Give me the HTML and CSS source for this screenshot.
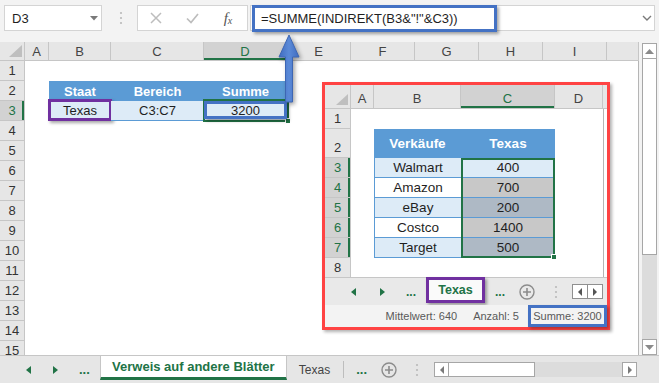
FILE: index.html
```html
<!DOCTYPE html>
<html lang="de">
<head>
    <meta charset="UTF-8">
    <meta name="viewport" content="width=device-width, initial-scale=1.0">
    <title>Verweis auf andere Blätter</title>
    <link rel="stylesheet" href="styles.css">
</head>
<body>
<div class="app">

    <!-- Namenfeld + Bearbeitungsleiste -->
    <div class="formula-row">
        <div class="namebox">
            <span>D3</span>
            <svg width="8" height="5" viewBox="0 0 8 5"><polygon points="0,0 8,0 4,4.5" fill="#7a7a7a"/></svg>
        </div>
        <svg class="grip" width="4" height="14" viewBox="0 0 4 14"><circle cx="2" cy="2" r="1.1"/><circle cx="2" cy="7" r="1.1"/><circle cx="2" cy="12" r="1.1"/></svg>
        <div class="fx-buttons">
            <span class="fx-btn"><svg width="12" height="12" viewBox="0 0 12 12"><path d="M1 1 L11 11 M11 1 L1 11" stroke="#bdbdbd" stroke-width="1.5"/></svg></span>
            <span class="fx-btn"><svg width="13" height="11" viewBox="0 0 13 11"><path d="M1 5.5 L5 9.5 L12 1" fill="none" stroke="#bdbdbd" stroke-width="1.7"/></svg></span>
            <span class="fx-btn fx-label">f<span class="fx-x">x</span></span>
        </div>
        <div class="formula">
            <span>=SUMME(INDIREKT(B3&amp;"!"&amp;C3))</span>
            <span class="mark mark-blue formula-mark"></span>
            <svg class="formula-chevron" width="10" height="6" viewBox="0 0 10 6"><path d="M1 1 L5 5 L9 1" fill="none" stroke="#7a7a7a" stroke-width="1.4"/></svg>
        </div>
    </div>

    <div class="sheet-area">
        <div class="sheet">
            <div class="col-heads">
                <div class="corner"><svg width="13" height="12" viewBox="0 0 13 12"><polygon points="13,0 13,12 0,12" fill="#bfbfbf"/></svg></div>
                <div class="ch col-a">A</div>
                <div class="ch col-b">B</div>
                <div class="ch col-c">C</div>
                <div class="ch col-d active">D</div>
                <div class="ch col-std">E</div>
                <div class="ch col-std">F</div>
                <div class="ch col-std">G</div>
                <div class="ch col-std">H</div>
                <div class="ch col-std">I</div>
                <div class="ch col-rest"></div>
            </div>
            <div class="sheet-body">
                <div class="row-heads">
                    <div class="rh">1</div>
                    <div class="rh">2</div>
                    <div class="rh active">3</div>
                    <div class="rh">4</div>
                    <div class="rh">5</div>
                    <div class="rh">6</div>
                    <div class="rh">7</div>
                    <div class="rh">8</div>
                    <div class="rh">9</div>
                    <div class="rh">10</div>
                    <div class="rh">11</div>
                    <div class="rh">12</div>
                    <div class="rh">13</div>
                    <div class="rh">14</div>
                    <div class="rh">15</div>
                </div>
                <div class="cells">
                    <div class="ref-table">
                        <div class="th">Staat</div>
                        <div class="th">Bereich</div>
                        <div class="th">Summe</div>
                        <div class="td">Texas<span class="mark mark-purple mark-b3"></span></div>
                        <div class="td">C3:C7</div>
                        <div class="td">3200<span class="cell-select"><i class="fill-handle"></i></span><span class="mark mark-blue mark-d3"></span></div>
                    </div>
                </div>
            </div>
        </div>
        <div class="vscroll">
            <div class="sb-btn"><svg width="9" height="5" viewBox="0 0 9 5"><polygon points="0,5 9,5 4.5,0" fill="#8a8a8a"/></svg></div>
            <div class="sb-thumb"></div>
            <div class="sb-track"></div>
            <div class="sb-btn"><svg width="9" height="5" viewBox="0 0 9 5"><polygon points="0,0 9,0 4.5,5" fill="#8a8a8a"/></svg></div>
        </div>
    </div>

    <div class="tabbar main-tabs">
        <svg class="nav-prev" width="5" height="8" viewBox="0 0 5 8"><polygon points="5,0 5,8 0,4"/></svg>
        <svg class="nav-next" width="5" height="8" viewBox="0 0 5 8"><polygon points="0,0 0,8 5,4"/></svg>
        <span class="tab-more first-more">...</span>
        <div class="sheet-tab active">Verweis auf andere Blätter</div>
        <div class="sheet-tab">Texas</div>
        <span class="tab-sep"></span>
        <span class="tab-more">...</span>
        <svg class="add-sheet" width="16" height="16" viewBox="0 0 16 16"><circle cx="8" cy="8" r="7" fill="none" stroke="#8c8c8c" stroke-width="1.4"/><path d="M8 4 V12 M4 8 H12" stroke="#8c8c8c" stroke-width="1.6"/></svg>
        <svg class="grip" width="4" height="14" viewBox="0 0 4 14"><circle cx="2" cy="2" r="1.1"/><circle cx="2" cy="7" r="1.1"/><circle cx="2" cy="12" r="1.1"/></svg>
        <div class="hscroll">
            <div class="hs-btn"><svg width="4" height="8" viewBox="0 0 4 8"><polygon points="4,0 4,8 0,4" fill="#7a7a7a"/></svg></div>
            <div class="hs-thumb"></div>
            <div class="hs-track"></div>
            <div class="hs-btn"><svg width="4" height="8" viewBox="0 0 4 8"><polygon points="0,0 0,8 4,4" fill="#7a7a7a"/></svg></div>
        </div>
    </div>

    <!-- eingefügter Ausschnitt vom Blatt "Texas" -->
    <div class="inset">
        <div class="i-heads">
            <div class="i-corner"><svg width="12" height="11" viewBox="0 0 12 11"><polygon points="12,0 12,11 0,11" fill="#bfbfbf"/></svg></div>
            <div class="ich i-col-a">A</div>
            <div class="ich i-col-b">B</div>
            <div class="ich i-col-c active">C</div>
            <div class="ich i-col-d">D</div>
            <div class="i-fill"></div>
        </div>
        <div class="i-body">
            <div class="i-rows">
                <div class="irh">1</div>
                <div class="irh tall">2</div>
                <div class="irh active">3</div>
                <div class="irh active">4</div>
                <div class="irh active">5</div>
                <div class="irh active">6</div>
                <div class="irh active">7</div>
                <div class="irh short">8</div>
            </div>
            <div class="i-cells">
                <div class="sales-table">
                    <div class="th">Verkäufe</div>
                    <div class="th">Texas</div>
                    <div class="sd name light">Walmart</div>
                    <div class="sd light">400</div>
                    <div class="sd name">Amazon</div>
                    <div class="sd sel">700</div>
                    <div class="sd name light">eBay</div>
                    <div class="sd sel-light">200</div>
                    <div class="sd name">Costco</div>
                    <div class="sd sel">1400</div>
                    <div class="sd name light">Target</div>
                    <div class="sd sel-light">500</div>
                    <span class="range-select"><i class="fill-handle"></i></span>
                </div>
            </div>
        </div>
        <div class="tabbar i-tabs">
            <svg class="nav-prev" width="5" height="8" viewBox="0 0 5 8"><polygon points="5,0 5,8 0,4"/></svg>
            <svg class="nav-next" width="5" height="8" viewBox="0 0 5 8"><polygon points="0,0 0,8 5,4"/></svg>
            <span class="tab-more first-more">...</span>
            <div class="inset-tab">Texas</div>
            <span class="tab-more">...</span>
            <svg class="add-sheet" width="16" height="16" viewBox="0 0 16 16"><circle cx="8" cy="8" r="7" fill="none" stroke="#8c8c8c" stroke-width="1.4"/><path d="M8 4 V12 M4 8 H12" stroke="#8c8c8c" stroke-width="1.6"/></svg>
            <svg class="grip" width="4" height="14" viewBox="0 0 4 14"><circle cx="2" cy="2" r="1.1"/><circle cx="2" cy="7" r="1.1"/><circle cx="2" cy="12" r="1.1"/></svg>
            <div class="mini-scroll">
                <span><svg width="4" height="8" viewBox="0 0 4 8"><polygon points="4,0 4,8 0,4" fill="#555"/></svg></span>
                <span><svg width="4" height="8" viewBox="0 0 4 8"><polygon points="0,0 0,8 4,4" fill="#555"/></svg></span>
            </div>
        </div>
        <div class="i-status">
            <span>Mittelwert: 640</span>
            <span class="status-count">Anzahl: 5</span>
            <span class="status-sum">Summe: 3200</span>
        </div>
    </div>

    <svg class="arrow" width="27" height="74" viewBox="0 0 27 74">
        <defs>
            <linearGradient id="arrowFill" x1="0" x2="1" y1="0" y2="0">
                <stop offset="0" stop-color="#3f6cc0"/>
                <stop offset="0.5" stop-color="#5b8ad8"/>
                <stop offset="1" stop-color="#3f6cc0"/>
            </linearGradient>
        </defs>
        <polygon points="13,3 23,25 16.5,25 16.5,70 9.5,70 9.5,25 3,25" fill="url(#arrowFill)" stroke="#3d66b3" stroke-width="1"/>
    </svg>
</div>
</body>
</html>
```

FILE: styles.css
```css
* {
    box-sizing: border-box;
}
body {
    margin: 0;
    font-family: "Liberation Sans", Arial, sans-serif;
    color: #1f1f1f;
}
.app {
    position: relative;
    width: 659px;
    height: 383px;
    overflow: hidden;
    background: #f3f3f3;
}

/* annotation frames */
.mark {
    position: absolute;
    border: 3px solid;
    box-shadow: 2px 2px 3px rgba(0, 0, 0, 0.35);
}
.mark-blue {
    border-color: #4472c4;
}
.mark-purple {
    border-color: #7030a0;
}

/* formula bar */
.formula-row {
    display: flex;
    align-items: flex-start;
    height: 42px;
    padding: 5px 0 0 4px;
}
.namebox {
    display: flex;
    align-items: center;
    justify-content: space-between;
    width: 98px;
    height: 26px;
    padding: 0 3px 0 7px;
    background: #fff;
    border: 1px solid #d4d4d4;
    font-size: 13px;
}
.grip {
    fill: #bababa;
}
.formula-row .grip {
    margin: 6px 0 0 17px;
}
.fx-buttons {
    display: flex;
    align-items: center;
    width: 111px;
    height: 26px;
    margin-left: 14px;
    background: #fff;
    border: 1px solid #d4d4d4;
}
.fx-btn {
    display: flex;
    justify-content: center;
    width: 36px;
}
.fx-label {
    font-family: "Liberation Serif", serif;
    font-style: italic;
    font-size: 15px;
    color: #555;
}
.fx-x {
    font-size: 10px;
    margin-top: 5px;
}
.formula {
    position: relative;
    display: flex;
    align-items: center;
    width: 405px;
    height: 26px;
    margin-left: 2px;
    padding: 0 2px 0 10px;
    background: #fff;
    border: 1px solid #d4d4d4;
    font-size: 13px;
}
.formula-mark {
    left: 1px;
    top: -1px;
    width: 245px;
    height: 27px;
}
.formula-chevron {
    margin-left: auto;
}

/* sheet grid */
.sheet-area {
    display: flex;
    height: 313px;
}
.sheet {
    display: flex;
    flex-direction: column;
    width: 639px;
}
.col-heads {
    display: flex;
    height: 19px;
    background: #e6e6e6;
    border-bottom: 1px solid #c6c6c6;
}
.corner {
    display: flex;
    align-items: flex-end;
    justify-content: flex-end;
    width: 25px;
    padding: 0 2px 3px 0;
    border-right: 1px solid #c6c6c6;
}
.ch {
    display: flex;
    align-items: center;
    justify-content: center;
    border-right: 1px solid #c6c6c6;
    font-size: 13px;
    color: #444;
}
.ch.active {
    background: #d2d2d2;
    color: #217346;
    box-shadow: inset 0 -2px #217346;
}
.col-a { width: 24px; }
.col-b { width: 62px; }
.col-c { width: 93px; }
.col-d { width: 83px; }
.col-std { width: 64px; }
.col-rest {
    flex: 1;
}
.sheet-body {
    display: flex;
    flex: 1;
    overflow: hidden;
    border-right: 1px solid #b5b5b5;
}
.row-heads {
    flex-shrink: 0;
    width: 25px;
    background: #e6e6e6;
    border-right: 1px solid #c6c6c6;
}
.rh {
    display: flex;
    align-items: center;
    justify-content: center;
    height: 20px;
    border-bottom: 1px solid #c6c6c6;
    font-size: 13px;
    color: #333;
}
.rh.active {
    background: #d2d2d2;
    color: #217346;
    box-shadow: inset -2px 0 #217346;
}
.cells {
    flex: 1;
    background: #fff;
}
.ref-table {
    display: grid;
    grid-template-columns: 62px 93px 83px;
    grid-template-rows: 20px 20px;
    width: max-content;
    margin: 20px 0 0 24px;
    font-size: 13px;
}
.th {
    display: flex;
    align-items: center;
    justify-content: center;
    background: #5b9bd5;
    color: #fff;
    font-weight: bold;
}
.td {
    position: relative;
    display: flex;
    align-items: center;
    justify-content: center;
    background: #ddebf7;
    border-bottom: 1px solid #5b9bd5;
}
.mark-b3 {
    left: -1px;
    top: -2px;
    right: -1px;
    bottom: -1px;
}
.mark-d3 {
    left: 0;
    top: 0;
    right: 0;
    bottom: 1px;
}
.cell-select {
    position: absolute;
    left: -1px;
    top: -2px;
    right: -2px;
    bottom: -2px;
    border: 2px solid #217346;
}
.fill-handle {
    position: absolute;
    right: -4px;
    bottom: -4px;
    width: 6px;
    height: 6px;
    background: #217346;
    border: 1px solid #fff;
}

/* scrollbars */
.vscroll {
    display: flex;
    flex-direction: column;
    width: 15px;
    height: 312px;
    margin: 1px 0 0 3px;
    background: #dcdcdc;
}
.sb-btn {
    display: flex;
    align-items: center;
    justify-content: center;
    height: 16px;
    background: #fff;
    border: 1px solid #a6a6a6;
}
.sb-thumb {
    height: 196px;
    background: #fff;
    border: 1px solid #a6a6a6;
    border-top: none;
}
.sb-track {
    flex: 1;
}

/* sheet tabs */
.tabbar {
    display: flex;
    align-items: center;
    fill: #217346;
}
.main-tabs {
    height: 28px;
    background: #e6e6e6;
    border-top: 1px solid #c6c6c6;
}
.tab-more {
    font-size: 13px;
    font-weight: bold;
    color: #217346;
}
.main-tabs .nav-prev { margin-left: 26px; }
.main-tabs .nav-next { margin-left: 22px; }
.main-tabs .first-more { margin-left: 21px; }
.sheet-tab {
    display: flex;
    align-items: center;
    padding: 0 12px;
    font-size: 12px;
    color: #444;
}
.sheet-tab.active {
    align-self: flex-start;
    justify-content: center;
    width: 187px;
    height: 24px;
    margin-left: 10px;
    padding: 0;
    background: #fff;
    border-left: 1px solid #c6c6c6;
    border-right: 1px solid #c6c6c6;
    border-bottom: 3px solid #217346;
    font-size: 13px;
    font-weight: bold;
    color: #217346;
}
.tab-sep {
    width: 1px;
    height: 17px;
    margin-left: 1px;
    background: #bdbdbd;
}
.main-tabs .tab-sep + .tab-more { margin-left: 12px; }
.main-tabs .add-sheet { margin-left: 14px; }
.main-tabs .grip { margin-left: 18px; }
.hscroll {
    display: flex;
    width: 203px;
    height: 15px;
    margin-left: 15px;
    background: #dcdcdc;
}
.hs-btn {
    display: flex;
    align-items: center;
    justify-content: center;
    width: 15px;
    background: #fff;
    border: 1px solid #a6a6a6;
}
.hs-thumb {
    width: 86px;
    background: #fff;
    border: 1px solid #a6a6a6;
    border-left: none;
}
.hs-track {
    flex: 1;
}

/* pasted picture of the "Texas" sheet */
.inset {
    position: absolute;
    left: 322px;
    top: 82px;
    display: flex;
    flex-direction: column;
    width: 288px;
    height: 248px;
    background: #fff;
    border: 3px solid #ff4343;
    box-shadow: 2px 2px 3px rgba(0, 0, 0, 0.3);
}
.i-heads {
    display: flex;
    flex-shrink: 0;
    height: 24px;
    background: #e6e6e6;
    border-bottom: 1px solid #c6c6c6;
}
.i-corner {
    display: flex;
    align-items: flex-end;
    justify-content: flex-end;
    width: 26px;
    padding: 0 2px 3px 0;
    border-right: 1px solid #c6c6c6;
}
.ich {
    display: flex;
    align-items: center;
    justify-content: center;
    padding-top: 4px;
    border-right: 1px solid #c6c6c6;
    font-size: 13px;
    color: #444;
}
.ich.active {
    background: #d2d2d2;
    color: #217346;
    box-shadow: inset 0 -2px #217346;
}
.i-col-a { width: 23px; }
.i-col-b { width: 87px; }
.i-col-c { width: 94px; }
.i-col-d { width: 48px; }
.i-fill {
    flex: 1;
}
.i-body {
    display: flex;
    flex-shrink: 0;
    height: 168px;
}
.i-rows {
    width: 26px;
    background: #e6e6e6;
    border-right: 1px solid #c6c6c6;
}
.irh {
    display: flex;
    align-items: flex-end;
    justify-content: center;
    height: 20px;
    padding-bottom: 2px;
    border-bottom: 1px solid #c6c6c6;
    font-size: 13px;
    color: #333;
}
.irh.tall {
    height: 29px;
}
.irh.short {
    height: 19px;
    border-bottom: none;
}
.irh.active {
    background: #d2d2d2;
    color: #217346;
    box-shadow: inset -2px 0 #217346;
}
.i-cells {
    width: 253px;
    background: #fff;
    border-right: 1px solid #b5b5b5;
}
.sales-table {
    position: relative;
    display: grid;
    grid-template-columns: 87px 94px;
    grid-template-rows: 29px repeat(5, 20px);
    width: max-content;
    margin: 20px 0 0 23px;
    font-size: 13.5px;
}
.sd {
    display: flex;
    align-items: center;
    justify-content: center;
    background: #fff;
    border-bottom: 1px solid #5b9bd5;
}
.sd.name {
    border-left: 1px solid #5b9bd5;
}
.sd.light {
    background: #ddebf7;
}
.sd.sel {
    background: #c8c8c8;
}
.sd.sel-light {
    background: #aeb9c5;
}
.range-select {
    position: absolute;
    left: 87px;
    top: 29px;
    width: 94px;
    height: 100px;
    border: 2px solid #217346;
}
.i-tabs {
    flex-shrink: 0;
    height: 28px;
    background: #e9e9e9;
    border-top: 1px solid #c6c6c6;
}
.i-tabs .nav-prev { margin-left: 26px; }
.i-tabs .nav-next { margin-left: 24px; }
.i-tabs .tab-more {
    font-size: 12px;
}
.i-tabs .first-more { margin-left: 21px; }
.inset-tab {
    align-self: flex-start;
    display: flex;
    align-items: center;
    justify-content: center;
    width: 59px;
    height: 26px;
    margin: -1px 10px 0 10px;
    background: #fafafa;
    border: 3px solid #7030a0;
    box-shadow: 2px 2px 3px rgba(0, 0, 0, 0.35);
    font-size: 12.5px;
    font-weight: bold;
    color: #217346;
}
.i-tabs .add-sheet { margin-left: 14px; }
.i-tabs .grip { margin-left: 19px; }
.mini-scroll {
    display: flex;
    width: 31px;
    height: 15px;
    margin-left: 14px;
    background: #fff;
    border: 1px solid #8f8f8f;
}
.mini-scroll span {
    display: flex;
    align-items: center;
    justify-content: center;
    flex: 1;
}
.mini-scroll span + span {
    border-left: 1px solid #8f8f8f;
}
.i-status {
    display: flex;
    align-items: center;
    justify-content: flex-end;
    flex-shrink: 0;
    height: 22px;
    background: #f3f3f3;
    font-size: 11px;
    color: #595959;
}
.status-count {
    margin-left: 16px;
}
.status-sum {
    display: flex;
    align-items: center;
    justify-content: center;
    width: 79px;
    height: 22px;
    margin-left: 9px;
    border: 3px solid #4472c4;
    box-shadow: 2px 2px 3px rgba(0, 0, 0, 0.3);
}

.arrow {
    position: absolute;
    left: 276px;
    top: 32px;
    filter: drop-shadow(2px 2px 2px rgba(0, 0, 0, 0.35));
}
```
